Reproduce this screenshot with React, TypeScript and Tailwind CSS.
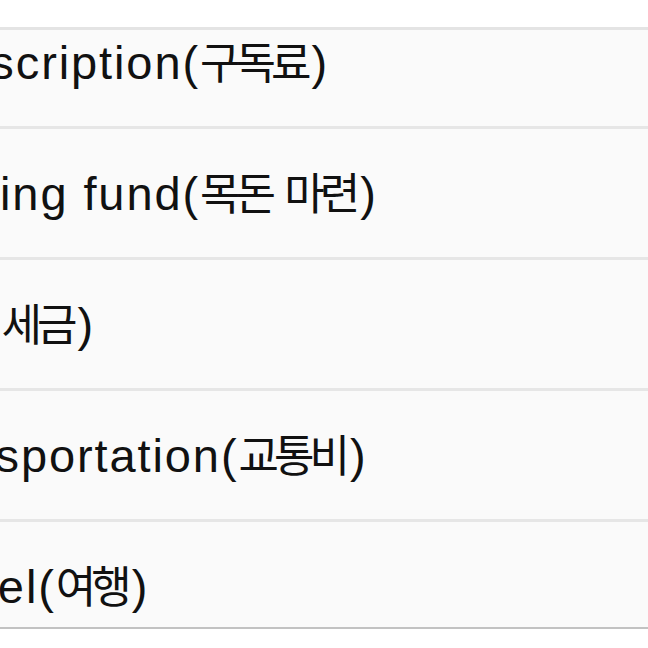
import React from 'react';

const rows = [
  { en: 'Subscription', ko: '구독료', pad: 'pl-[9px]' },
  { en: 'Sinking fund', ko: '목돈 마련', pad: 'pl-[9px]' },
  { en: 'Tax', ko: '세금', pad: 'pl-[13px]' },
  { en: 'Transportation', ko: '교통비', pad: 'pl-[1px]' },
  { en: 'Travel', ko: '여행', pad: 'pl-[6px]' },
];

export default function App() {
  return (
    <div
      className="w-[648px] h-[648px] flex flex-col bg-white overflow-hidden"
      style={{ fontFamily: '"Liberation Sans", "Noto Sans CJK KR", sans-serif' }}
    >
      {/* top bar */}
      <div className="h-[30px] shrink-0 bg-white border-b-[3px] border-[#e4e4e4]" />

      {/* scrolled list */}
      <div className="flex-1 min-h-0 overflow-hidden bg-[#fafafa]">
        <div className="-mt-[32px] -ml-[108px] w-[756px]">
          {rows.map((row, i) => (
            <div
              key={i}
              className={`h-[131px] flex items-center border-b-[3px] border-[#e6e6e6] bg-[#fafafa] ${row.pad}`}
            >
              <span className="text-[47px] leading-none tracking-[1.9px] text-[#111] whitespace-nowrap">
                {row.en}(<span className="text-[44px] tracking-[-5px] [word-spacing:6px] mr-[5px]">{row.ko}</span>)
              </span>
            </div>
          ))}
        </div>
      </div>

      {/* bottom bar */}
      <div className="h-[21px] shrink-0 bg-white border-t-2 border-[#c2c2c2]" />
    </div>
  );
}
